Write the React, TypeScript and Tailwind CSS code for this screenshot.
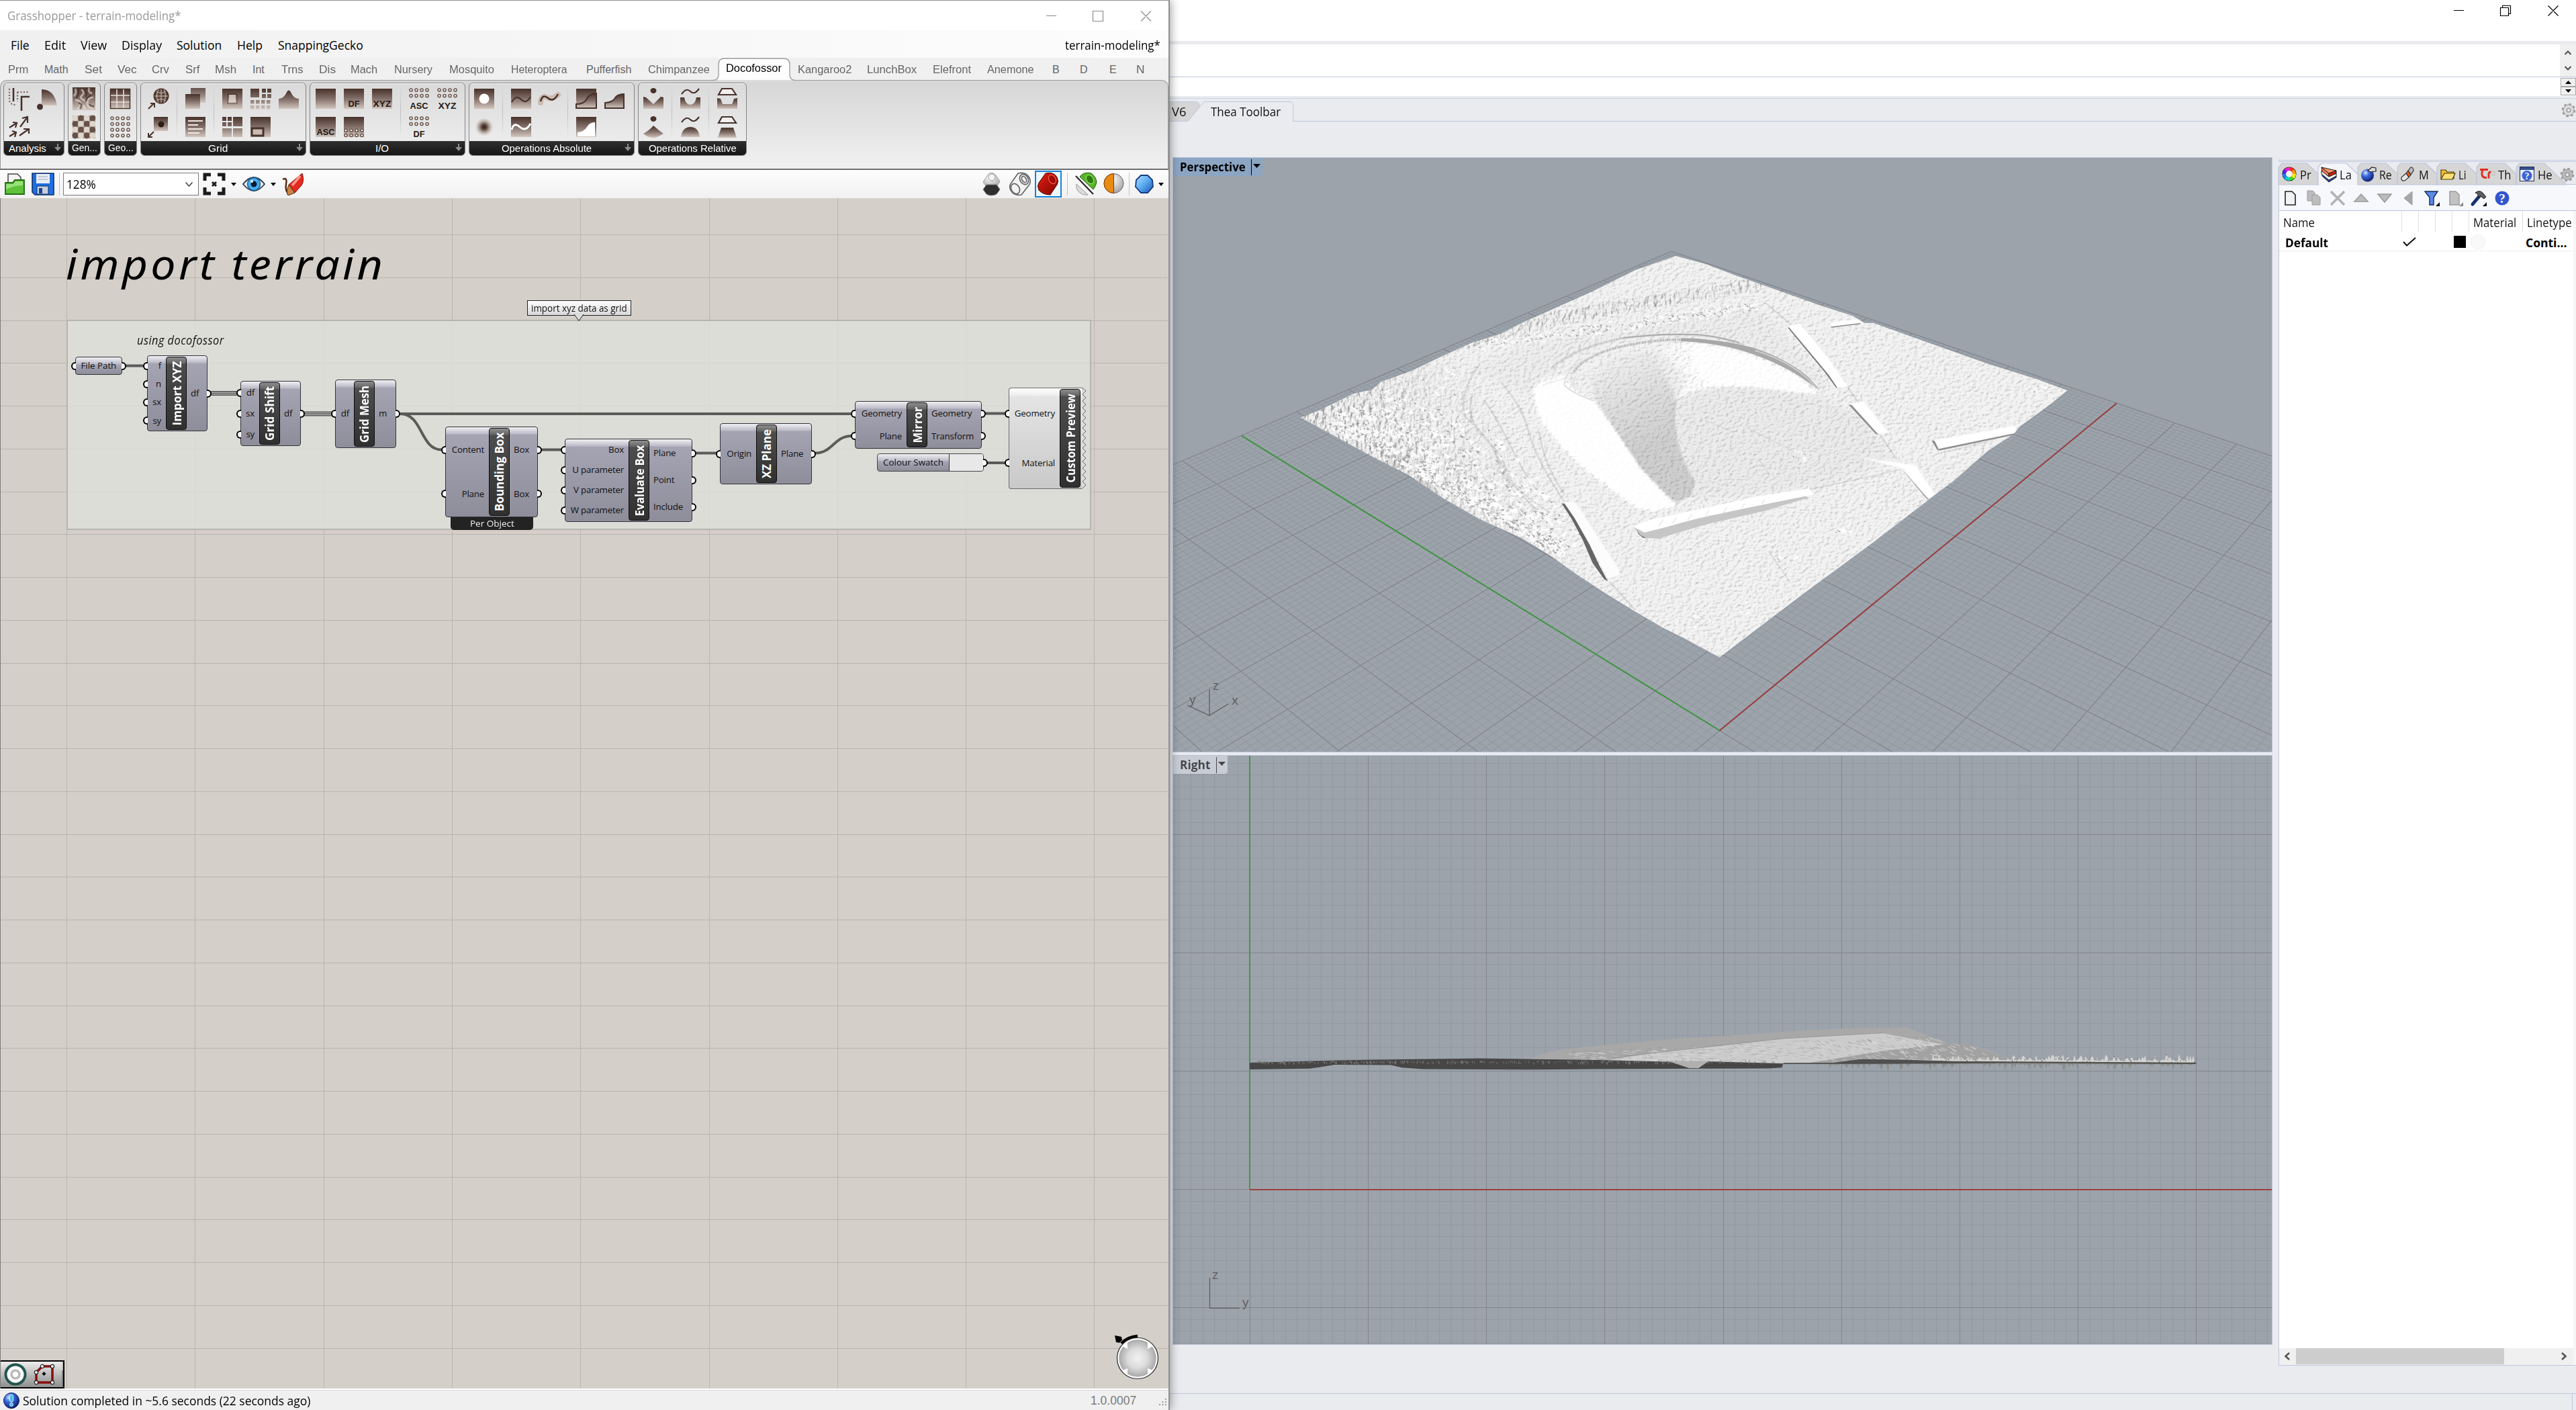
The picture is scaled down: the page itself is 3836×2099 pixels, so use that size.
import { useLayoutEffect, useRef, useState } from "react";
import type { ReactNode } from "react";

const UI = "font-['Open_Sans','Noto_Sans',sans-serif]";
const ARIAL = "font-['Liberation_Sans',sans-serif]";

/** Single line of text squeezed or stretched to an exact width. */
function Fit({ w, children, className = "" }: { w: number; children: ReactNode; className?: string }) {
  const ref = useRef<HTMLSpanElement>(null);
  const [scale, setScale] = useState(1);
  useLayoutEffect(() => {
    const natural = ref.current?.offsetWidth ?? 0;
    if (natural > 0) setScale(w / natural);
  }, [w]);
  return (
    <span className={`inline-block shrink-0 whitespace-nowrap ${className}`} style={{ width: w }}>
      <span ref={ref} className="inline-block origin-left whitespace-nowrap" style={{ transform: `scaleX(${scale})` }}>
        {children}
      </span>
    </span>
  );
}

/** Row of labels, each with its left edge and width. */
function Labels({ items, start = 0 }: { items: [string, number, number][]; start?: number }) {
  let x = start;
  return (
    <>
      {items.map(([t, l, w]) => {
        const gap = l - x;
        x = l + w;
        return (
          <span key={t} className="flex shrink-0" style={{ marginLeft: gap }}>
            <Fit w={w}>{t}</Fit>
          </span>
        );
      })}
    </>
  );
}

function Defs() {
  return (
    <svg className="absolute h-0 w-0" aria-hidden="true">
      <defs>
        <linearGradient id="br" x1="0" y1="0" x2="0" y2="1">
          <stop offset="0" stopColor="#47322a" />
          <stop offset="0.5" stopColor="#83706a" />
          <stop offset="1" stopColor="#d2c6be" />
        </linearGradient>
        <linearGradient id="brU" gradientUnits="userSpaceOnUse" x1="0" y1="0" x2="0" y2="32">
          <stop offset="0" stopColor="#47322a" />
          <stop offset="0.5" stopColor="#83706a" />
          <stop offset="1" stopColor="#d2c6be" />
        </linearGradient>
        <radialGradient id="spot">
          <stop offset="0" stopColor="#2a1a14" />
          <stop offset="0.35" stopColor="#6b554b" />
          <stop offset="1" stopColor="#d9cfc8" stopOpacity="0.3" />
        </radialGradient>
        <linearGradient id="blueG" x1="0" y1="0" x2="1" y2="1">
          <stop offset="0" stopColor="#b8e2ff" />
          <stop offset="0.5" stopColor="#58abf0" />
          <stop offset="1" stopColor="#1e4fb0" />
        </linearGradient>
        <linearGradient id="redG" x1="0" y1="0" x2="1" y2="1">
          <stop offset="0" stopColor="#e81e10" />
          <stop offset="1" stopColor="#7d0500" />
        </linearGradient>
        <radialGradient id="ball" cx="0.35" cy="0.3" r="0.8">
          <stop offset="0" stopColor="#d8e6ff" />
          <stop offset="0.35" stopColor="#3c6be0" />
          <stop offset="1" stopColor="#06135c" />
        </radialGradient>
        <radialGradient id="greyBall" cx="0.4" cy="0.3" r="0.8">
          <stop offset="0" stopColor="#ffffff" />
          <stop offset="1" stopColor="#9b9b9b" />
        </radialGradient>
        <radialGradient id="knob">
          <stop offset="0" stopColor="#f1f1f1" />
          <stop offset="0.5" stopColor="#dcdcdc" />
          <stop offset="1" stopColor="#a4a4a4" />
        </radialGradient>
      </defs>
    </svg>
  );
}

const D = "#47322a";
const sq = <rect x="1" y="1" width="30" height="30" fill="url(#br)" />;
const glyph = (t: string, y = 28) => (
  <text x="16" y={y} textAnchor="middle" fontSize="13" fontWeight="700" fill="#241812" fontFamily="Liberation Sans, sans-serif" textLength={t.length === 2 ? 17 : 27} lengthAdjust="spacingAndGlyphs">
    {t}
  </text>
);
const rings = (rows: number, y0: number, cols = 4, dx = 8, dy = 8.6) =>
  Array.from({ length: rows * cols }, (_, i) => (
    <circle key={i} cx={4 + (i % cols) * dx} cy={y0 + Math.floor(i / cols) * dy} r="2.1" fill="#f4f1ee" stroke="#6b574e" strokeWidth="1.5" />
  ));

const ICONS: Record<string, ReactNode> = {
  measure: (
    <g fill="none" stroke={D} strokeWidth="2.600">
      <path d="M7 0v20M18 13h13M19 12v22" />
      <path d="M1 1v18q2 6 9 6M13 6h18M13 6v14" strokeWidth="2.200" strokeDasharray="2 2.500" stroke="#7b665c" />
    </g>
  ),
  fan: (
    <g>
      <path d="M7 2Q26 2 30 26H7Z" fill="url(#br)" />
      <circle cx="4.500" cy="28" r="4.500" fill={D} />
    </g>
  ),
  arrows: (
    <g fill="none" stroke={D} strokeWidth="2.200">
      <path d="M1 17L12 10M6 9l6 1-2 7M17 16L28 1M20 3l8-2v9M1 30l10-6M5 22l6 2-2 7M16 29l14-10M22 19h8v7" />
    </g>
  ),
  noise: (
    <g>
      <rect width="34" height="34" x="-1" y="-1" fill="url(#br)" />
      <g stroke="#efe8e2" strokeWidth="3" opacity="0.55" fill="none">
        <path d="M3 1q3 6-2 11M12 2q6 5 1 9t5 8M24 0q-3 6 4 8M30 14q-8 0-9 7t8 9M3 18q8 0 8 6t-5 7M16 25q-1 5 3 6" />
      </g>
      <g stroke="#3c2820" strokeWidth="2.500" opacity="0.6" fill="none">
        <path d="M7 3q2 8-3 12M18 4q4 6 0 9M27 11q-8 3-8 9M8 22q7 2 2 9M24 24q2 4 7 3" />
      </g>
    </g>
  ),
  checker: (
    <g>
      <rect width="34" height="34" x="-1" y="-1" fill="#a8998f" />
      {Array.from({ length: 16 }, (_, i) => {
        const col = i % 4;
        const row = Math.floor(i / 4);
        return <circle key={i} cx={3 + col * 8.6} cy={3 + row * 8.6} r="4.600" fill={(col + row) % 2 ? "#5a443a" : "#e8dfd7"} opacity="0.85" />;
      })}
    </g>
  ),
  grid: (
    <g>
      <rect x="1.500" y="1.500" width="29" height="29" fill="url(#br)" stroke={D} strokeWidth="1.500" />
      <path d="M11 2v28M21 2v28M2 11h28M2 21h28" stroke="#e8dfd8" strokeWidth="1.600" />
    </g>
  ),
  dots: <g>{rings(4, 3)}</g>,
  globeOut: (
    <g fill="none" stroke={D} strokeWidth="2">
      <circle cx="20" cy="12" r="10.500" fill="#5c463c" />
      <path d="M10 12h20M20 2v20M13 5q7 5 14 0M13 19q7-5 14 0M16 2q-5 10 0 20M24 2q5 10 0 20" stroke="#cfc2b9" strokeWidth="1" />
      <path d="M1 31l8-8M4 23h6v6" />
    </g>
  ),
  cellOut: (
    <g fill="none" stroke={D} strokeWidth="2">
      <rect x="9" y="1" width="21" height="21" fill="url(#br)" stroke="none" />
      <circle cx="20" cy="12" r="4.500" fill="#2d1d16" stroke="none" />
      <path d="M9 23l-8 8M1 25v6h6" />
    </g>
  ),
  layers: (
    <g>
      <rect x="9" y="0" width="22" height="22" fill="url(#br)" opacity="0.8" />
      <rect x="1" y="9" width="22" height="22" fill="url(#br)" />
    </g>
  ),
  list: (
    <g>
      {sq}
      <path d="M5 7h22M5 13h15M5 19h22M5 25h17" stroke="#f0e9e4" strokeWidth="2" />
    </g>
  ),
  inset: (
    <g>
      {sq}
      <rect x="9" y="8" width="14" height="15" fill="url(#br)" stroke="#5a443a" />
      <rect x="11" y="10" width="10" height="11" fill="#e9e0d8" opacity="0.75" />
    </g>
  ),
  mosaic: (
    <g fill="url(#brU)">
      <rect x="1" y="1" width="13" height="13" />
      {[18, 26].map((x) => [1, 9].map((y) => <rect key={`${x}${y}`} x={x} y={y} width="6" height="6" />))}
      {[1, 9, 17, 25].map((x) => [18, 26].map((y) => <rect key={`${x}-${y}`} x={x} y={y} width="5.500" height="5.500" />))}
    </g>
  ),
  mosaic2: (
    <g fill="url(#brU)">
      <rect x="17" y="1" width="14" height="14" />
      <rect x="1" y="18" width="14" height="13" />
      <rect x="17" y="18" width="14" height="13" />
      {[1, 9].map((x) => [1, 9].map((y) => <rect key={`${x}${y}`} x={x} y={y} width="6" height="6" />))}
    </g>
  ),
  corner: (
    <g>
      {sq}
      <rect x="3" y="18" width="17" height="11" fill="#c8bab1" stroke={D} strokeWidth="3" />
    </g>
  ),
  bell: <path d="M1 31V16q8-1 11-8 4-9 8 0 3 7 11 8v15Z" fill="url(#br)" />,
  plain: sq,
  df: <g>{sq}{glyph("DF")}</g>,
  xyz: <g>{sq}{glyph("XYZ")}</g>,
  asc: <g>{sq}{glyph("ASC")}</g>,
  sqdots: <g>{sq}{rings(2, 21, 4, 8, 7.5)}</g>,
  dasc: <g>{rings(2, 3)}{glyph("ASC", 31)}</g>,
  dxyz: <g>{rings(2, 3)}{glyph("XYZ", 31)}</g>,
  ddf: <g>{rings(2, 3)}{glyph("DF", 31)}</g>,
  hole: <g>{sq}<circle cx="16" cy="16" r="7.500" fill="#fff" /></g>,
  spot: <circle cx="16" cy="16" r="13" fill="url(#spot)" />,
  waveD: <g>{sq}<path d="M2 21q7-12 14-4t14-4" fill="none" stroke={D} strokeWidth="2.200" /></g>,
  waveB: <g fill="none"><path d="M3 22Q4 10 12 14T29 10" stroke="#cdbcb0" strokeWidth="8" strokeLinecap="round" /><path d="M3 20Q6 8 14 15T29 9" stroke={D} strokeWidth="2.500" /></g>,
  waveW: <g>{sq}<path d="M2 20Q5 8 14 16T30 11" fill="none" stroke="#fff" strokeWidth="3" /></g>,
  curveD: <g>{sq}<path d="M1 30V24q12 0 16-8t14-8v22Z" fill="url(#br)" stroke={D} strokeWidth="2" /></g>,
  curve: <path d="M2 30V22q12-1 15-7t13-6v21Z" fill="url(#br)" stroke={D} strokeWidth="2" />,
  curveW: <g>{sq}<path d="M3 30V24q10-1 14-8t12-7v21Z" fill="#fff" /></g>,
  dotV: <g><ellipse cx="16" cy="4" rx="4.500" ry="4" fill={D} /><path d="M1 31V13l4 1 11 10 11-11 4 1v17Z" fill="url(#br)" /></g>,
  dotHill: <g><ellipse cx="16" cy="4" rx="4.500" ry="4" fill={D} /><path d="M16 14Q24 21 31 26 20 33 16 32 8 32 1 26 10 21 16 14Z" fill="url(#br)" /></g>,
  waveU: <g><path d="M3 9q7-10 13-4t13-4" fill="none" stroke={D} strokeWidth="2.200" /><path d="M1 31V14h6q2 11 9 11t9-11h6v17Z" fill="url(#br)" /></g>,
  waveHill: <g><path d="M3 9q7-10 13-4t13-4" fill="none" stroke={D} strokeWidth="2.200" /><path d="M2 31Q4 16 16 16T30 31Z" fill="url(#br)" /></g>,
  trapU: <g><path d="M8 1h15l6 9H3Z" fill="#f2efed" stroke={D} strokeWidth="2.200" /><path d="M1 31V15l5 1 3 8h14l3-8 5-1v16Z" fill="url(#br)" /></g>,
  trapHill: <g><path d="M8 1h15l6 9H3Z" fill="#f2efed" stroke={D} strokeWidth="2.200" /><path d="M2 32L7 17H25L30 32Z" fill="url(#br)" /></g>,
};

function ToolIcon({ name }: { name: string }) {
  return (
    <span className="flex h-[42px] w-[42px] items-center justify-center">
      {name && (
        <svg width="32" height="32" viewBox="0 0 32 32" className="overflow-visible">
          {ICONS[name]}
        </svg>
      )}
    </span>
  );
}

type Panel = { label: string; w: number; lw: number; pl: number; more?: boolean; groups: string[][][] };
const PANELS: Panel[] = [
  { label: "Analysis", w: 91, lw: 56, pl: 2, more: true, groups: [[["measure", "arrows"], ["fan", ""]]] },
  { label: "Gen...", w: 49, lw: 38, pl: 2, groups: [[["noise", "checker"]]] },
  { label: "Geo...", w: 49, lw: 38, pl: 2, groups: [[["grid", "dots"]]] },
  { label: "Grid", w: 247, lw: 29, pl: 5, more: true, groups: [[["globeOut", "cellOut"]], [["layers", "list"]], [["inset", "mosaic2"], ["mosaic", "corner"], ["bell", ""]]] },
  { label: "I/O", w: 232, lw: 20, pl: 2, more: true, groups: [[["plain", "asc"], ["df", "sqdots"], ["xyz", ""]], [["dasc", "ddf"], ["dxyz", ""]]] },
  { label: "Operations Absolute", w: 247, lw: 134, pl: 1, more: true, groups: [[["hole", "spot"]], [["waveD", "waveW"], ["waveB", ""]], [["curveD", "curveW"], ["curve", ""]]] },
  { label: "Operations Relative", w: 162, lw: 131, pl: 1, groups: [[["dotV", "dotHill"]], [["waveU", "waveHill"]], [["trapU", "trapHill"]]] },
];

function Ribbon() {
  return (
    <div className={`flex h-[132px] shrink-0 gap-[5px] rounded-t-[10px] border border-b-0 border-[#9b9b9b] bg-gradient-to-b from-[#d6d6d6] to-[#f1f1f1] pl-1 pt-[3px] ${ARIAL}`}>
      {PANELS.map((p) => (
        <div key={p.label} className="flex h-[109px] shrink-0 flex-col overflow-hidden rounded-[6px] border border-[#858585] bg-gradient-to-b from-[#dadada] to-[#f0f0f0]" style={{ width: p.w }}>
          <div className="flex h-[87px] pt-[2px] shadow-[inset_0_1px_0_#fff]" style={{ paddingLeft: p.pl }}>
            {p.groups.map((g, gi) => (
              <div key={gi} className="flex">
                {gi > 0 && <span className="mx-[6px] h-[80px] w-px bg-gradient-to-b from-transparent via-[#bdbdbd] to-transparent" />}
                {g.map((col, ci) => (
                  <div key={ci} className="flex flex-col">
                    {col.map((n, i) => (
                      <ToolIcon key={i} name={n} />
                    ))}
                  </div>
                ))}
              </div>
            ))}
          </div>
          <div className="relative flex h-[21px] items-center justify-center bg-gradient-to-b from-[#2f2f2f] to-[#161616] text-[15px] leading-none text-white">
            <Fit w={p.lw} className={p.more ? (p.w < 100 ? "mr-[19px]" : "mr-[16px]") : p.w < 60 ? "mb-[2px]" : ""}>{p.label}</Fit>
            {p.more && (
              <svg className="absolute right-[4px] top-[4px]" width="10" height="12" viewBox="0 0 10 12">
                <path d="M4 0h2v5h4L5 11 0 5h4Z" fill="#8e8e8e" />
              </svg>
            )}
          </div>
        </div>
      ))}
    </div>
  );
}

const Caret = ({ className = "" }: { className?: string }) => (
  <svg width="8" height="5" viewBox="0 0 8 5" className={`shrink-0 ${className}`}>
    <path d="M0 0h8L4 5Z" />
  </svg>
);

function CanvasToolbar() {
  return (
    <div className="flex h-[44px] shrink-0 items-center border-t-2 border-[#6f6f6f] bg-gradient-to-b from-[#fdfdfd] to-[#f1f1f1] pl-[7px] pr-[7px]">
      <svg width="30" height="34" viewBox="0 0 30 34">
        <path d="M5 2h14l5 5v16H5Z" fill="#f3f3f3" stroke="#444" strokeWidth="1.500" />
        <path d="M1 15h11l3-4h14v21H1Z" fill="#5fc23a" stroke="#226c10" strokeWidth="1.800" />
        <path d="M2 17h11l3-4h11v6q-14 0-25 6Z" fill="#a5e887" opacity="0.8" />
      </svg>
      <svg width="34" height="34" viewBox="0 0 34 34" className="ml-[10px]">
        <path d="M1 1h32v32H5L1 29Z" fill="#1f6fe0" stroke="#0d3170" strokeWidth="1.600" />
        <rect x="7" y="2" width="20" height="14" fill="#e9edf4" />
        <path d="M10 6h14M10 10h14" stroke="#9aa6bb" />
        <rect x="8" y="20" width="17" height="12" fill="#c7cfdb" stroke="#0d3170" />
        <rect x="11" y="23" width="5" height="8" fill="#1b448f" />
      </svg>
      <span className="ml-[7px] h-[34px] w-px bg-[#c4c4c4]" />
      <div className={`ml-[5px] flex h-[34px] w-[202px] items-center justify-between border border-[#7a7a7a] bg-white pl-1 pr-2 text-[18px] ${UI}`}>
        <Fit w={44}>128%</Fit>
        <svg width="11" height="7" viewBox="0 0 11 7" fill="none" stroke="#333" strokeWidth="1.300">
          <path d="M0.500 0.500l5 5.500 5-5.500" />
        </svg>
      </div>
      <svg width="34" height="34" viewBox="0 0 34 34" className="ml-[6px]" fill="none" stroke="#1b1b1b" strokeWidth="5">
        <path d="M3 12V3h9M22 3h9v9M31 22v9h-9M12 31H3v-9" />
        <path d="M14 14l6 6M20 14l-6 6" strokeWidth="3" />
      </svg>
      <Caret className="ml-[8px]" />
      <svg width="34" height="24" viewBox="0 0 34 24" className="ml-[9px]">
        <path d="M1 12Q9 2 17 2t16 10Q25 22 17 22T1 12Z" fill="#eef4f8" stroke="#2c3b47" strokeWidth="1.800" />
        <circle cx="17" cy="12" r="9.500" fill="#45aef0" stroke="#1c5b95" strokeWidth="1.500" />
        <circle cx="17" cy="12" r="4.500" fill="#0a1c30" />
        <circle cx="14" cy="8" r="2" fill="#fff" />
      </svg>
      <Caret className="ml-[8px]" />
      <svg width="34" height="34" viewBox="0 0 34 34" className="ml-[8px]">
        <path d="M2 10Q9 6 7 17T12 32" fill="none" stroke="#5b2a18" strokeWidth="2.500" />
        <path d="M31 1Q35 14 29 20L20 30 11 18Z" fill="#e32b22" stroke="#7c0d0a" />
        <path d="M28 5L16 19" stroke="#ff9a8a" strokeWidth="3.500" />
        <path d="M11 18l9 12-10 4Q6 30 11 18Z" fill="#c88444" stroke="#53290a" />
      </svg>
      <div className="ml-auto flex items-center">
        <svg width="27" height="36" viewBox="0 0 27 36">
          <path d="M8 4Q14-2 20 5L26 14 20 24H7L1 15Z" fill="url(#greyBall)" stroke="#a3a3a3" />
          <ellipse cx="14" cy="8" rx="5" ry="5" fill="#f5f5f5" stroke="#999" />
          <path d="M6 19h15l5 7-5 7q-8 4-15 0L1 26Z" fill="#2f2f2f" stroke="#777" />
        </svg>
        <svg width="34" height="36" viewBox="0 0 34 36" className="ml-[12px]" fill="#f2f2f2" stroke="#666" strokeWidth="1.700">
          <path d="M14 2q12-3 17 7 3 6-1 11L19 34q-11 2-16-7-3-6 1-11Z" />
          <ellipse cx="23" cy="11" rx="6" ry="8" transform="rotate(-30 23 11)" />
          <ellipse cx="23" cy="11" rx="3" ry="5" transform="rotate(-30 23 11)" />
          <ellipse cx="10" cy="25" rx="6" ry="8" transform="rotate(-30 10 25)" />
        </svg>
        <span className="ml-[5px] flex h-[40px] w-[40px] items-center justify-center border-2 border-[#1683d8] bg-[#eef6fc]">
          <svg width="34" height="36" viewBox="0 0 34 36" className="shrink-0">
            <path d="M13 2q12-3 17 6 3 6 0 11L20 34Q9 34 3 27q-3-6 0-11Z" fill="url(#redG)" stroke="#4d0400" />
            <ellipse cx="23" cy="11" rx="5" ry="7" transform="rotate(-30 23 11)" fill="#a00c05" stroke="#ff6b5c" />
          </svg>
        </span>
        <span className="ml-[8px] h-[34px] w-px bg-[#c4c4c4]" />
        <svg width="34" height="36" viewBox="0 0 34 36" className="ml-[10px]">
          <path d="M3 18l17 16q-9 1-15-6-3-4-2-10Z" fill="#dcdcdc" stroke="#999" />
          <path d="M8 7q6-8 17-5 7 5 8 13-1 6-5 11Z" fill="#57b52a" stroke="#1f5d0a" />
          <ellipse cx="23" cy="11" rx="5" ry="7" transform="rotate(-30 23 11)" fill="#2f7d12" stroke="#a4ea80" />
          <path d="M2 6l26 27" stroke="#222" strokeWidth="2" />
        </svg>
        <svg width="31" height="34" viewBox="0 0 31 34" className="ml-[9px]">
          <circle cx="15.500" cy="16" r="14.500" fill="url(#greyBall)" stroke="#666" />
          <path d="M15.500 1.500a14.500 14.500 0 0 0 0 29Z" fill="#e98a12" stroke="#8a3a00" />
        </svg>
        <span className="ml-[7px] h-[34px] w-px bg-[#c4c4c4]" />
        <svg width="28" height="28" viewBox="0 0 28 28" className="ml-[8px]">
          <path d="M9 1h10l7 7 1 10-8 9H9l-8-9 1-10Z" fill="url(#blueG)" stroke="#173a83" strokeWidth="1.800" />
        </svg>
        <Caret className="ml-[7px]" />
      </div>
    </div>
  );
}

type NodeSpec = {
  title: string; len: number; x: number; y: number; w: number; h: number;
  plate: number; ins: string[]; outs: string[]; light?: boolean;
};
const NODES: NodeSpec[] = [
  { title: "Import XYZ", len: 96, x: 219, y: 529, w: 90, h: 113, plate: 28, ins: ["f", "n", "sx", "sy"], outs: ["df"] },
  { title: "Grid Shift", len: 81, x: 358, y: 567, w: 90, h: 97, plate: 28, ins: ["df", "sx", "sy"], outs: ["df"] },
  { title: "Grid Mesh", len: 85, x: 499, y: 565, w: 91, h: 102, plate: 28, ins: ["df"], outs: ["m"] },
  { title: "Bounding Box", len: 117, x: 663, y: 635, w: 138, h: 135, plate: 65, ins: ["Content", "Plane"], outs: ["Box", "Box"] },
  { title: "Evaluate Box", len: 106, x: 841, y: 653, w: 190, h: 124, plate: 95, ins: ["Box", "U parameter", "V parameter", "W parameter"], outs: ["Plane", "Point", "Include"] },
  { title: "XZ Plane", len: 73, x: 1072, y: 630, w: 137, h: 91, plate: 54, ins: ["Origin"], outs: ["Plane"] },
  { title: "Mirror", len: 54, x: 1273, y: 597, w: 189, h: 71, plate: 77, ins: ["Geometry", "Plane"], outs: ["Geometry", "Transform"] },
  { title: "Custom Preview", len: 132, x: 1502, y: 577, w: 110, h: 151, plate: 76, ins: ["Geometry", "Material"], outs: [], light: true },
];

const GripL = () => <span className="absolute -left-[7px] top-1/2 h-[12px] w-[7px] -translate-y-1/2 rounded-l-full border-2 border-r-0 border-black bg-white" />;
const GripR = () => <span className="absolute -right-[7px] top-1/2 h-[12px] w-[7px] -translate-y-1/2 rounded-r-full border-2 border-l-0 border-black bg-white" />;

const BODY = "bg-[linear-gradient(180deg,#f0f0f4_0px,#bbbac7_10px,#a5a4b3_11px,#8e8d9a_100%)]";

function GhNode({ n }: { n: NodeSpec }) {
  return (
    <div
      className={`absolute flex rounded-[4px] border-[1.5px] py-[1px] ${n.light ? "rounded-r-none border-r-0 border-[#6c6c6c] bg-[linear-gradient(180deg,#fff_0px,#ededed_11px,#e4e4e4_12px,#c9c9c9_100%)]" : `border-[#33333a] ${BODY}`}`}
      style={{ left: n.x - 1, top: n.y - 295, width: n.w, height: n.h }}
    >
      <div className="flex flex-col" style={{ width: n.plate - 1 }}>
        {n.ins.map((t, i) => (
          <div key={i} className="relative flex flex-1 items-center justify-end whitespace-nowrap pr-[7px] tracking-[-0.2px]">
            <GripL />
            {t}
          </div>
        ))}
      </div>
      <div className="flex w-[31px] shrink-0 items-center justify-center rounded-[4px] border-[1.5px] border-[#0c0c0c] bg-[linear-gradient(180deg,#8f8f8f_0px,#636363_9px,#4d4d4d_10px,#303030_100%)]">
        <span className="shrink-0 -rotate-90 text-[17px] font-bold leading-none text-white">
          <Fit w={n.len}>{n.title}</Fit>
        </span>
      </div>
      <div className="flex flex-1 flex-col">
        {n.outs.map((t, i) => (
          <div key={i} className="relative flex flex-1 items-center whitespace-nowrap pl-[6px] tracking-[-0.2px]">
            <GripR />
            {t}
          </div>
        ))}
      </div>
    </div>
  );
}

const zigzag = (() => {
  let d = "M0 0";
  for (let i = 0; i < 15; i++) d += `L6 ${5 + i * 10}L1 ${Math.min(151, 10 + i * 10)}`;
  return d;
})();

function Wires() {
  return (
    <svg className="absolute left-0 top-0" width="1738" height="600" viewBox="1 295 1738 600" fill="none" stroke="#5b5b59" strokeWidth="4">
      <path d="M186 544.500H214M596 616H1267M596 616C630 616 625 669.500 658 669.500M806 669.500H836M1036 674.500H1068M1214 674.500C1240 674.500 1242 649 1268 649M1466 615.500H1498M1469 689H1498" />
      <g strokeWidth="7">
        <path d="M314 585.500H353M453 616H494" />
        <path d="M314 585.500H353M453 616H494" stroke="#c8c8c5" strokeWidth="3.500" />
        <path d="M314 585.500H353M453 616H494" strokeWidth="1.500" />
      </g>
    </svg>
  );
}

function GhCanvas() {
  const vs = Array.from({ length: 9 }, (_, i) => 98 + i * 191.3);
  const hs = Array.from({ length: 28 }, (_, i) => 54 + i * 63.76);
  return (
    <div className={`relative flex-1 overflow-hidden border-l border-[#7d7d7d] bg-[#d4cfc8] text-[13.3px] leading-none text-[#111] ${UI}`}>
      <svg className="absolute inset-0" width="1738" height="1773" shapeRendering="crispEdges" fill="#bab6af">
        {vs.map((x) => <rect key={x} x={Math.round(x)} y="0" width="1" height="1773" />)}
        {hs.map((y) => <rect key={y} x="0" y={Math.round(y)} width="1738" height="1" />)}
      </svg>
      <div className="absolute left-[98px] top-[181px] h-[313px] w-[1526px] border-2 border-[#b3b5ae] bg-[#dfe0dc]/80" />
      <div className="absolute left-[97px] top-[57px] text-[62px] italic leading-[80px] tracking-[4px] text-black font-['Noto_Sans','Open_Sans',sans-serif]">
        <Fit w={476}>import terrain</Fit>
      </div>
      <div className="absolute left-[203px] top-[201px] text-[17.5px] italic leading-[20px] tracking-[0.5px]">
        <Fit w={130}>using docofossor</Fit>
      </div>
      <div className="absolute left-[784px] top-[152px] flex h-[23px] w-[155px] items-center justify-center border-[1.5px] border-[#222] bg-gradient-to-b from-white to-[#d8d8d8] text-[14px]">
        <Fit w={143}>import xyz data as grid</Fit>
        <svg className="absolute left-[68px] top-[20px]" width="16" height="11" viewBox="0 0 16 11">
          <path d="M1 0L8 9.500 15 0" fill="#dcdcdc" stroke="#222" />
        </svg>
      </div>
      <Wires />
      <div className={`absolute left-[111px] top-[236px] flex h-[27px] w-[70px] items-center justify-center rounded-[4px] border-[1.5px] border-[#33333a] ${BODY}`}>
        <GripL />
        <Fit w={53}>File Path</Fit>
        <GripR />
      </div>
      {NODES.map((n) => <GhNode key={n.title} n={n} />)}
      <div className="absolute left-[670px] top-[475px] flex h-[19px] w-[123px] items-center justify-center rounded-b-[5px] bg-[#232323] text-[#f0f0f0]">
        <Fit w={66}>Per Object</Fit>
      </div>
      <svg className="absolute left-[1610px] top-[282px]" width="8" height="152" viewBox="0 0 8 152">
        <path d={zigzag + "L0 151Z"} fill="#dcdcdc" />
        <path d={zigzag} fill="none" stroke="#666" />
      </svg>
      <div className={`absolute left-[1305px] top-[380px] flex h-[27px] w-[159px] items-stretch rounded-[4px] border-[1.5px] border-[#44444a] ${BODY}`}>
        <span className="flex flex-1 items-center justify-center border-r-[1.5px] border-[#33333a]">
          <Fit w={90}>Colour Swatch</Fit>
        </span>
        <span className="w-[50px] rounded-r-[3px] bg-[#e8e8e8]" />
        <GripR />
      </div>
      <div className="absolute bottom-0 left-0 flex h-[42px] w-[95px] items-center gap-[10px] border-2 border-l-0 border-black bg-gradient-to-b from-[#ededed] to-[#8f8f8f] pl-[5px]">
        <svg width="34" height="34" viewBox="0 0 34 34" className="shrink-0">
          <circle cx="17" cy="17" r="14.500" fill="#fff" stroke="#235650" strokeWidth="4" />
          <circle cx="17" cy="17" r="6" fill="#fff" stroke="#b9b9b9" strokeWidth="3.500" />
        </svg>
        <svg width="32" height="32" viewBox="0 0 32 32" className="shrink-0">
          <path d="M4 28V13L13 4H28V28Z" fill="none" stroke="#8a0d0d" strokeWidth="3.500" />
          {[[4, 28], [4, 13], [13, 4], [28, 4], [28, 28]].map(([x, y]) => (
            <circle key={`${x}-${y}`} cx={x} cy={y} r="2.600" fill="#fff" stroke="#222" strokeWidth="1.200" />
          ))}
          <path d="M15.500 12l3 3-3 3-3-3Z" />
        </svg>
        <span className="ml-auto h-full w-[8px] bg-gradient-to-b from-[#c6c6c6] from-35% to-[#808080] to-35%" />
      </div>
      <svg className="absolute bottom-[12px] right-[13px]" width="70" height="70" viewBox="0 0 70 70">
        <path d="M3 3l10 2 1 5-4 4-5-1Z" />
        <path d="M13 15Q22 5 37 4" fill="none" stroke="#000" strokeWidth="4.500" />
        <circle cx="37" cy="37" r="29" fill="url(#knob)" stroke="#fff" strokeWidth="2.500" />
        <circle cx="37" cy="37" r="30.500" fill="none" stroke="#2b2b2b" strokeWidth="1.200" />
        <g fill="#fff">
          <path d="M14 19l8-7 0 11ZM60 19l-8-7 0 11ZM14 55l8-3 0 9ZM60 55l-8-3 0 9Z" />
        </g>
      </svg>
    </div>
  );
}

const TABS1: [string, number, number][] = [
  ["Prm", 12, 30], ["Math", 66, 36], ["Set", 126, 26], ["Vec", 175, 29], ["Crv", 226, 26], ["Srf", 276, 21], ["Msh", 320, 32], ["Int", 376, 18],
  ["Trns", 419, 32], ["Dis", 475, 25], ["Mach", 522, 40], ["Nursery", 587, 57], ["Mosquito", 669, 67], ["Heteroptera", 761, 84], ["Pufferfish", 873, 67], ["Chimpanzee", 965, 92],
];
const TABS2: [string, number, number][] = [
  ["Kangaroo2", 1188, 80], ["LunchBox", 1291, 74], ["Elefront", 1389, 57], ["Anemone", 1470, 70], ["B", 1567, 11], ["D", 1608, 12], ["E", 1652, 11], ["N", 1692, 13],
];

function Grasshopper() {
  return (
    <div className={`relative z-10 flex h-full w-[1742px] shrink-0 flex-col border-r-2 border-t border-[#8f8f8f] bg-[#f0f0f0] shadow-[0_0_14px_rgba(0,0,0,0.45)] ${UI}`}>
      <div className="flex h-[44px] shrink-0 items-center bg-white text-[17.5px] text-[#999]">
        <Labels items={[["Grasshopper - terrain-modeling*", 11, 259]]} />
        <svg className="ml-auto mr-[25px] mt-[1px]" width="157" height="16" viewBox="0 0 157 16" fill="none" stroke="#8c8c8c" strokeWidth="1.200">
          <path d="M0 7.500h15M69.500 0.500h15v15h-15ZM141 0.500l15 15M156 0.500l-15 15" />
        </svg>
      </div>
      <div className="flex h-[41px] shrink-0 items-center bg-gradient-to-r from-[#f0f0f0] to-[#fdfdfd] pt-[3px] text-[17.5px] text-black">
        <Labels items={[["File", 16, 28], ["Edit", 66, 32], ["View", 120, 39], ["Display", 181, 60], ["Solution", 263, 67], ["Help", 353, 38], ["SnappingGecko", 414, 127]]} />
        <Fit w={142} className="ml-auto mr-[12px]">terrain-modeling*</Fit>
      </div>
      <div className={`relative flex h-[33px] shrink-0 items-center pt-[2px] text-[16px] text-[#666] ${ARIAL}`}>
        <Labels items={TABS1} />
        <svg className="absolute left-[1059px] top-0 z-10 h-[36px] w-[130px]" viewBox="0 0 130 36">
          <path d="M3 33.500Q11 33 11 25V10Q11 1 20 1H108Q117 1 117 10V25Q117 33 125 33.500Z" fill="#fdfdfd" />
          <path d="M3 33.500Q11 33 11 25V10Q11 1 20 1H108Q117 1 117 10V25Q117 33 125 33.500" fill="none" stroke="#9b9b9b" strokeWidth="1.300" />
          <path d="M10 33h110v3H10Z" fill="#dcdcdc" />
        </svg>
        <span className="z-20 mb-[4px] ml-[24px] text-black"><Fit w={83}>Docofossor</Fit></span>
        <Labels items={TABS2} start={1164} />
      </div>
      <Ribbon />
      <CanvasToolbar />
      <GhCanvas />
      <div className="flex h-[32px] shrink-0 items-center border-t-2 border-white bg-[#f0f0f0] pl-[5px] shadow-[inset_0_1px_0_#d9d9d9]">
        <svg width="24" height="24" viewBox="0 0 24 24" className="mt-[1px]">
          <circle cx="12" cy="12" r="11.500" fill="url(#ball)" stroke="#0c2161" />
          <rect x="9.500" y="3" width="5" height="11" rx="2.500" fill="#45b8e8" stroke="#d5f2ff" />
          <circle cx="12" cy="18" r="2.500" fill="#45b8e8" stroke="#d5f2ff" />
        </svg>
        <Fit w={428} className="ml-[5px] pt-[2px] text-[17.5px] text-black">Solution completed in ~5.6 seconds (22 seconds ago)</Fit>
        <Fit w={68} className={`ml-auto mr-[34px] pt-[2px] text-[17.5px] text-[#7a7a7a] ${ARIAL}`}>1.0.0007</Fit>
        <svg className="mr-[2px] mt-[8px]" width="12" height="12" viewBox="0 0 12 12" fill="#9d9d9d">
          <path d="M9 0h2v2H9ZM9 4h2v2H9ZM4.500 4h2v2h-2ZM9 8h2v2H9ZM4.500 8h2v2h-2ZM0 8h2v2H0Z" />
        </svg>
      </div>
    </div>
  );
}

/* Perspective construction plane: unit square mapped onto the view. */
const H = { a: 2037.2, b: 22.7, c: 2560.8, d: -211.95, e: -181.2, f: 1087.5, g: 0.45876, h: 0.3977 };
const project = (u: number, v: number) => {
  const k = H.g * u + H.h * v + 1;
  return `${((H.a * u + H.b * v + H.c) / k - 1747).toFixed(1)} ${((H.d * u + H.e * v + H.f) / k - 235).toFixed(1)}`;
};
const gridPath = (major: boolean) => {
  let d = "";
  for (let i = -100; i <= 100; i++) {
    if ((i % 10 === 0) !== major) continue;
    const t = i / 100;
    d += `M${project(t, -1)}L${project(t, 1)}M${project(-1, t)}L${project(1, t)}`;
  }
  return d;
};

/* Small deterministic generator for mesh roughness. */
const seeded = (seed: number) => () => {
  seed = (seed * 1103515245 + 12345) % 2147483648;
  return seed / 2147483648;
};

const OUTLINE =
  "M718 263L760 284 800 312 870 357 920 390 968 418 985 437 998 437 1060 478 1160 543 1230 583 1272 612 1250 645 1205 705 1196 725 1160 768 1110 848 1085 882 1076 895 1000 1002 900 1137 780 1304 730 1255 700 1228 660 1185 620 1140 580 1092 540 1040 500 995 440 945 390 893 340 832 290 785 230 725 187 682 215 662 240 640 262 620 288 610 300 590 345 560 385 525 430 488 470 465 500 437 600 355 660 300Z";

function Terrain() {
  const rnd = seeded(11);
  let clumps = "";
  let lights = "";
  const blot = (x: number, y: number, s: number) => `M${x.toFixed(0)} ${y.toFixed(0)}l${(s * (rnd() - 0.2)).toFixed(1)} ${(s * 1.6 * rnd()).toFixed(1)} ${(s * 0.6 * rnd()).toFixed(1)} ${(-s * rnd()).toFixed(1)}Z`;
  for (let i = 0; i < 620; i++) {
    const t = rnd();
    const r = rnd() * rnd() * (1 - 0.65 * t);
    const x = 210 + t * 335 + r * 170;
    const y = 685 + t * 345 - r * 150;
    clumps += blot(x, y, 6);
    lights += blot(x + 4, y + 3, 13);
  }
  for (let i = 0; i < 150; i++) {
    const t = rnd();
    clumps += blot(430 + t * 400, 495 - t * 105 + (rnd() - 0.5) * 20, 5);
    lights += blot(433 + t * 400, 495 - t * 105 + (rnd() - 0.5) * 28, 9);
  }
  for (let i = 0; i < 45; i++) {
    const [cx, cy] = [[872, 1048], [890, 778], [948, 970], [750, 1205], [815, 1175], [1235, 605], [400, 565], [655, 445]][i % 8];
    clumps += blot(cx + (rnd() - 0.5) * 22, cy + (rnd() - 0.5) * 22, 4);
    lights += blot(cx + (rnd() - 0.5) * 26, cy + (rnd() - 0.5) * 32, 11);
  }
  return (
    <g>
      <defs>
        <clipPath id="meshClip">
          <path d={OUTLINE} transform="translate(-7 -5) scale(1.0523 0.574)" />
        </clipPath>
        <filter id="grain" x="0" y="0" width="1" height="1" colorInterpolationFilters="sRGB">
          <feTurbulence type="fractalNoise" baseFrequency="0.16 0.24" numOctaves="3" seed="4" />
          <feDiffuseLighting surfaceScale="0.900" diffuseConstant="1.13" lightingColor="#fff">
            <feDistantLight azimuth="215" elevation="62" />
          </feDiffuseLighting>
        </filter>
        <filter id="coarse" x="0" y="0" width="1" height="1" colorInterpolationFilters="sRGB">
          <feTurbulence type="fractalNoise" baseFrequency="0.16 0.1" numOctaves="4" seed="9" />
          <feDiffuseLighting surfaceScale="4" diffuseConstant="1.22" lightingColor="#fff">
            <feDistantLight azimuth="200" elevation="58" />
          </feDiffuseLighting>
        </filter>
        <filter id="soft"><feGaussianBlur stdDeviation="12" /></filter>
        <filter id="soft2"><feGaussianBlur stdDeviation="4" /></filter>
        <filter id="soft3"><feGaussianBlur stdDeviation="1.500" /></filter>
        <linearGradient id="slope" gradientUnits="userSpaceOnUse" x1="560" y1="240" x2="720" y2="620">
          <stop offset="0" stopColor="#efefef" />
          <stop offset="0.5" stopColor="#dedede" />
          <stop offset="1" stopColor="#cfcfcf" />
        </linearGradient>
        <linearGradient id="dome" gradientUnits="userSpaceOnUse" x1="660" y1="300" x2="900" y2="260">
          <stop offset="0" stopColor="#fff" stopOpacity="0" />
          <stop offset="1" stopColor="#fff" />
        </linearGradient>
        <linearGradient id="roughMaskG" gradientUnits="userSpaceOnUse" x1="300" y1="560" x2="520" y2="440">
          <stop offset="0" stopColor="#fff" />
          <stop offset="0.45" stopColor="#999" />
          <stop offset="1" stopColor="#000" />
        </linearGradient>
        <mask id="roughMask" maskUnits="userSpaceOnUse" x="0" y="0" width="1636" height="884">
          <rect width="1636" height="884" fill="url(#roughMaskG)" />
          <path d="M400 275L540 232 740 200 880 178 880 196 720 222 560 252 440 284Z" fill="#aaa" filter="url(#soft3)" />
        </mask>
      </defs>
      <g clipPath="url(#meshClip)">
        <path d={OUTLINE} transform="translate(-7 -5) scale(1.0523 0.574)" fill="#f3f3f3" />
        <g transform="translate(483 215) scale(0.33333)">
          <path d="M800 440Q880 385 1040 373 1200 380 1430 410L1640 520 1760 700 1500 810 1300 840 870 880Q850 760 815 670 780 560 800 440Z" fill="#ececec" filter="url(#soft)" />
          <path d="M-120 300Q200 130 560 100L1180 30 1480 360 1440 400Q1300 260 1100 190 900 140 600 170 380 210 250 290L160 420Z" fill="#eeeeee" filter="url(#soft)" />
          <path d="M160 380Q200 320 300 325 300 380 430 440L540 590 640 740 800 905 700 935 620 920 500 830 380 740 280 640 200 540Q160 460 160 380Z" fill="#fff" filter="url(#soft2)" />
          <path d="M415 345Q440 275 530 235L720 210 850 330 800 440Q770 560 830 720L880 800 870 860 800 895 760 865 640 740 540 590 440 440Z" fill="url(#slope)" filter="url(#soft2)" />
          <path d="M660 210Q850 165 1000 195L1200 255 1330 320 1435 408 1300 400Q1100 366 950 380 850 400 795 440 760 330 660 210Z" fill="url(#dome)" filter="url(#soft2)" />
          <path d="M795 450Q770 560 830 710L870 800" stroke="#cbcbcb" strokeWidth="8" filter="url(#soft2)" />
        </g>
        <g transform="translate(-7 -5) scale(1.0523 0.574)" fill="none" strokeLinecap="round" stroke="#dcdcdc" strokeWidth="3">
          <path d="M440 545Q410 620 420 680 470 760 470 830 500 880 540 930M470 590Q500 650 510 720T560 900M430 620Q420 690 450 740T480 850M448 640Q470 700 485 760T525 880M525 720Q530 800 560 880M460 760Q480 850 520 920" />
          <path d="M845 385L880 440M962 605L1012 740 1030 790M905 870L1035 818M740 940L905 880M625 1110L660 1180M1090 775L1160 745" />
          <path d="M820 710L885 770M835 790L850 830M880 1110L850 1030M760 690L800 720" strokeWidth="2" />
          <path d="M288 760L318 765 348 805 320 815ZM350 835L385 860 370 878Z" fill="#dcdcdc" stroke="none" filter="url(#soft3)" />
        </g>
        <rect width="1636" height="884" filter="url(#grain)" className="mix-blend-multiply" opacity="0.9" />
        <g mask="url(#roughMask)" className="mix-blend-multiply">
          <rect width="1636" height="884" filter="url(#coarse)" opacity="0.55" />
        </g>
        <g transform="translate(483 215) scale(0.33333)" fill="none">
          <path d="M168 400Q200 350 300 345 300 390 430 445L540 600 640 750 790 905 700 930 620 910 500 820 380 730 280 630 200 530Q168 460 168 400Z" fill="#fff" opacity="0.9" filter="url(#soft2)" />
          <path d="M860 200Q980 190 1180 260L1320 325 1420 400 1300 394Q1100 362 960 374 880 330 860 200Z" fill="#fff" opacity="0.75" filter="url(#soft2)" />
          <path d="M240 295Q350 200 560 160 720 138 900 145 1000 155 1100 190" stroke="#c4c4c4" strokeWidth="9" strokeDasharray="5 2 9 3 3 2" />
          <path d="M340 310Q400 225 600 188 760 158 900 170" stroke="#bdbdbd" strokeWidth="11" strokeDasharray="7 3 3 2 10 2" />
          <path d="M230 320L320 275M210 350L310 310M200 370L300 340M350 330L440 290M350 350L430 320" stroke="#e2e2e2" strokeWidth="3" />
          <path d="M560 160Q720 138 900 145 1000 155 1080 180" stroke="#a6a6a6" strokeWidth="4" />
          <path d="M820 160Q980 160 1150 205 1300 258 1390 335L1440 392 1380 352Q1280 280 1130 228 1000 182 820 174Z" fill="#a8a8a8" filter="url(#soft3)" />
          <path d="M1150 215Q1300 262 1390 345L1425 385" stroke="#d0d0d0" strokeWidth="5" />
          <path d="M430 235Q300 290 298 370 340 410 430 440M345 385Q330 360 350 330" stroke="#e0e0e0" strokeWidth="6" />
        </g>
        <g transform="translate(-7 -5) scale(1.0523 0.574)">
          <path d={lights} fill="#fff" opacity="0.85" />
          <path d={clumps} fill="#8f8f8f" opacity="0.75" />
          <g fill="#fff" filter="url(#soft3)">
            <path d="M963 648L984 640 1018 720 1003 727Z" />
            <path d="M1082 742L1197 703 1204 722 1090 766Z" />
            <path d="M978 785L1036 800 1058 806 1086 884 1074 893 1040 815Z" />
            <path d="M934 438L976 426 982 436 942 448Z" />
          </g>
          <path d="M962 648L967 650 1005 727 1001 725ZM1080 742L1088 766 1091 768 1084 742ZM1089 764L1197 723 1200 726 1091 768ZM1034 808L1076 895 1073 893ZM936 447L980 437 978 440 940 449Z" fill="#8f8f8f" />
        </g>
        <g transform="translate(483 215) scale(0.33333)">
          <path d="M1300 105L1350 95 1470 240 1565 375 1520 382 1400 235Z" fill="#fff" filter="url(#soft3)" />
          <path d="M1296 112L1304 114 1380 205 1480 325 1520 384 1512 380 1460 310 1360 190Z" fill="#777" />
          <path d="M300 893L350 895 540 1190 545 1215 495 1235 400 1060Z" fill="#fcfcfc" filter="url(#soft3)" />
          <path d="M286 898L300 900 345 965 410 1080 455 1175 492 1245 478 1238 425 1165 380 1060 330 965Z" fill="#666" />
          <path d="M615 1008L650 1052 720 1055 920 995 1200 930 1390 872 1370 862 900 965 660 1022Z" fill="#c6c6c6" filter="url(#soft3)" />
          <path d="M618 1012L640 1040 665 1052 650 1052 630 1035Z" fill="#7b7b7b" />
          <path d="M605 1000L690 970 900 925 1160 868 1390 832 1415 858 1180 905 900 962 750 1005 655 1028Z" fill="#fff" filter="url(#soft3)" />
          <path d="M720 1000l20-28M780 990l20-30M850 975l18-30M930 955l15-28M1010 940l15-25M1090 920l15-22M1180 900l14-18" stroke="#e6e6e6" strokeWidth="4" />
        </g>
      </g>
    </g>
  );
}

function AxisText({ x, y, t }: { x: number; y: number; t: string }) {
  return (
    <text x={x} y={y} fontSize="19" fill="#5c5c60" fontFamily="Open Sans, sans-serif">{t}</text>
  );
}

function ViewTag({ name, w, active }: { name: string; w: number; active?: boolean }) {
  return (
    <div className={`absolute left-0 top-0 flex h-[27px] items-center rounded-br-[4px] pl-[10px] text-[17px] font-bold leading-none ${active ? "bg-[#8ba5c3] text-black" : "bg-[#c7ccd5] text-[#48484a]"}`}>
      <Fit w={w}>{name}</Fit>
      <span className={`ml-[8px] h-[24px] w-px ${active ? "bg-black" : "bg-[#48484a]"}`} />
      <svg className="-mt-[3px] ml-[2px] mr-[3px]" width="11" height="6" viewBox="0 0 11 6">
        <path d="M0 0h11L5.500 6Z" fill={active ? "#000" : "#48484a"} />
      </svg>
    </div>
  );
}

function PerspectiveView() {
  return (
    <div className="relative h-[886px] overflow-hidden border border-[#b9c3da] bg-[#9ca3ab]">
      <svg width="1636" height="884" viewBox="0 0 1636 884" className="block" fill="none">
        <path d={gridPath(false)} stroke="#8f969d" strokeWidth="1" />
        <path d={gridPath(true)} stroke="#81848c" strokeWidth="1.200" />
        <path d={`M${project(0, 0)}L${project(0, 1)}`} stroke="#3f9440" strokeWidth="2" />
        <path d={`M${project(0, 0)}L${project(1, 0)}`} stroke="#963d3d" strokeWidth="2" />
        <Terrain />
        <path d="M54 792V830L21 815M54 830L82 813" stroke="#5c5c60" strokeWidth="1.200" />
        <AxisText x={59} y={792} t="z" />
        <AxisText x={24} y={813} t="y" />
        <AxisText x={87} y={814} t="x" />
      </svg>
      <ViewTag name="Perspective" w={98} active />
    </div>
  );
}

function RightView() {
  const minorV: number[] = [];
  const majorV: number[] = [];
  for (let i = -6; i <= 86; i++) (i % 10 === 0 ? majorV : minorV).push(Math.round(114 + i * 17.615));
  const minorH: number[] = [];
  const majorH: number[] = [];
  for (let i = -36; i <= 13; i++) (i % 10 === 0 ? majorH : minorH).push(Math.round(645 + i * 17.615));
  const rnd = seeded(5);
  let up = "M870 348";
  let down = "M870 347";
  let upDark = "";
  for (let x = 872; x < 1454; x += 2) {
    const k = x > 1400 ? 34 : x > 1080 ? 24 : 3;
    const top = x < 1000 ? 345 : 334 + (x - 1000) * 0.012 - Math.pow(rnd(), 2.2) * k;
    up += `L${x} ${top.toFixed(1)}`;
    if (x > 1080 && rnd() > 0.6) upDark += `M${x} ${(top + 2 + rnd() * 6).toFixed(0)}v${(3 + rnd() * 6).toFixed(0)}`;
    down += `L${x} ${(349 + (x > 935 ? Math.pow(rnd(), 6) * (x < 1120 ? 34 : 24) + rnd() * 3 : rnd() * 3)).toFixed(1)}`;
  }
  let flecks = "";
  for (let i = 0; i < 330; i++) {
    const x = 120 + rnd() * 740;
    flecks += `M${x.toFixed(0)} ${(336 + rnd() * 8).toFixed(0)}v${(3 + rnd() * 7).toFixed(0)}`;
  }
  let streaks = "";
  for (let i = 0; i < 420; i++) {
    const t = rnd();
    const x = 560 + t * 590;
    const top = 300 - t * 75;
    streaks += `M${x.toFixed(0)} ${(top + rnd() * (335 - top)).toFixed(0)}l${(4 + rnd() * 6).toFixed(0)} ${(t > 0.6 ? 9 : 3).toFixed(0)}`;
  }
  return (
    <div className="relative h-[878px] overflow-hidden border border-[#b9c3da] bg-[#9ca3ab]">
      <svg width="1636" height="876" viewBox="0 0 1636 876" className="block">
        <g fill="#9198a0" shapeRendering="crispEdges">
          {minorV.map((x) => <rect key={x} x={x} y="0" width="1" height="876" />)}
          {minorH.map((y) => <rect key={y} x="0" y={y} width="1636" height="1" />)}
        </g>
        <g fill="#81858e" shapeRendering="crispEdges">
          {majorV.map((x) => <rect key={x} x={x} y="0" width="1" height="876" />)}
          {majorH.map((y) => <rect key={y} x="0" y={y} width="1636" height="1" />)}
        </g>
        <rect x="113" y="0" width="2" height="646" fill="#479648" />
        <rect x="114" y="645" width="1522" height="2" fill="#9b4141" />
        <g transform="translate(-7 325) scale(1.0523 0.38265)">
          <defs>
            <clipPath id="hillClip">
              <path d="M505 334L530 310 560 292 650 268 730 249 820 235 900 219 960 212 1045 207 1062 225 1105 270 1130 273 1160 295 1190 330 980 348 620 345Z" />
            </clipPath>
          </defs>
          <g clipPath="url(#hillClip)">
            <rect x="500" y="200" width="700" height="150" fill="#a8a8a8" />
            <path d="M600 345L680 310 740 292 870 252 1010 230 1048 250 1100 275 1020 295 960 325 920 348Z" fill="#cbcbcb" />
            <path d="M900 348L1010 300 1110 270 1130 273 1190 330Z" fill="#a2a2a2" />
            <path d={streaks} stroke="#999" strokeWidth="1.200" opacity="0.7" />
            <path d={streaks} stroke="#dedede" strokeWidth="1.500" transform="translate(6 7)" opacity="0.7" />
            <path d="M630 325L740 290 870 251 1010 229" fill="none" stroke="#8d8d8d" strokeWidth="1.500" />
          </g>
          <path d={up + "V350H870Z"} fill="#d2d2d0" />
          <path d={upDark} stroke="#6f6f6f" strokeWidth="1.200" />
          <path d={down + "V345H870Z"} fill="#8e8e8c" />
          <path d="M870 346L940 345 980 331 1040 333 1110 339 1454 344V350L1200 346 1050 349 870 350Z" fill="#505050" />
          <path d="M115 345L180 340 250 335 440 328 520 331 600 334 715 342 735 364 750 366 762 340 870 348 868 364 850 367 600 370 500 372 360 370 330 364 315 354 235 353 215 362 200 368 115 371Z" fill="#464646" />
          <path d={flecks} stroke="#777" strokeWidth="1" />
          <path d="M708 340L765 338 750 366H737Z" fill="#b0b0b0" />
        </g>
        <path d="M54.500 777V822.500H99" fill="none" stroke="#5c5c60" strokeWidth="1.200" />
        <AxisText x={58} y={779} t="z" />
        <AxisText x={103} y={820} t="y" />
      </svg>
      <ViewTag name="Right" w={46} />
    </div>
  );
}

const GearIcon = ({ className = "", fill = "#b9b9b9" }: { className?: string; fill?: string }) => (
  <svg width="22" height="22" viewBox="0 0 22 22" className={className}>
    <circle cx="11" cy="11" r="8" fill={fill} stroke="#9b9b9b" />
    <circle cx="11" cy="11" r="9" fill="none" stroke="#9b9b9b" strokeWidth="2.600" strokeDasharray="3.600 3.470" />
    <circle cx="11" cy="11" r="2.800" fill="#efeff2" stroke="#9b9b9b" strokeWidth="1.500" />
  </svg>
);

const SIDE_TABS: { t: string; w: number; icon: ReactNode }[] = [
  {
    t: "Pr", w: 17,
    icon: (
      <g fill="none" strokeWidth="5">
        <circle cx="11" cy="11" r="10.500" fill="#000" stroke="none" />
        {["#ff2a2a", "#ff9a00", "#f7f000", "#30e020", "#00d8c8", "#1f7dff", "#5a20ff", "#f020d0"].map((c, i) => (
          <path key={c} d="M11 3.500A7.500 7.500 0 0 1 16.500 5.900" stroke={c} transform={`rotate(${i * 45} 11 11)`} />
        ))}
        <circle cx="11" cy="11" r="5" fill="#f4f4f4" stroke="none" />
      </g>
    ),
  },
  {
    t: "La", w: 18,
    icon: (
      <g stroke="#1a1a1a" strokeWidth="1" strokeLinejoin="round">
        <path d="M1 10L11 19 22 14V16L11 23 1 14Z" fill="#2747a0" />
        <path d="M0 6L11 15 22 10V14L11 20 0 11Z" fill="#f5f5f5" />
        <path d="M0 1L11 10V15L1 7Z" fill="#ff7a4c" />
        <path d="M11 10L22 6V10L11 15Z" fill="#d0200c" />
        <path d="M0 1L22 6 11 10Z" fill="#ff9a70" />
      </g>
    ),
  },
  {
    t: "Re", w: 19,
    icon: (
      <g>
        <circle cx="9.500" cy="13" r="9.500" fill="url(#ball)" />
        <path d="M10 6l6-5 6 1v5l-8 1Z" fill="#d9d9d9" stroke="#222" strokeWidth="1.200" />
      </g>
    ),
  },
  {
    t: "M", w: 15,
    icon: (
      <g stroke="#333" strokeWidth="1.200">
        <path d="M11 6l4-5q4 0 4 5l-4 6Z" fill="#bdbdbd" />
        <path d="M8 10l3-4 4 6-3 4Z" fill="#e9591c" />
        <path d="M8 10l4 6-6 5Q0 22 1 16Z" fill="#e6e6e6" />
      </g>
    ),
  },
  {
    t: "Li", w: 12,
    icon: (
      <g stroke="#4a3a00" strokeWidth="1.200">
        <path d="M1 18V5h7l2 3h10v10Z" fill="#f0bf35" />
        <path d="M1 19L6 10h16l-4 9Z" fill="#ffe07a" />
      </g>
    ),
  },
  {
    t: "Th", w: 19,
    icon: (
      <g fill="none" stroke="#e52a20" strokeWidth="2.800">
        <path d="M0 4.500h12M4 4.500Q0 17 10 16.500M13 17.500V11q0-3 4-3" />
        <circle cx="19.500" cy="10" r="2.800" stroke="#c8c8c8" strokeWidth="2" />
      </g>
    ),
  },
  {
    t: "He", w: 22,
    icon: (
      <g>
        <rect x="0.500" y="0.500" width="21" height="21" fill="#e9eefb" stroke="#222c55" />
        <rect x="1" y="1" width="20" height="4" fill="#33508f" />
        <circle cx="11" cy="13.500" r="7.500" fill="#3a62d8" />
        <text x="11" y="18.500" textAnchor="middle" fontSize="14" fontWeight="700" fill="#fff" fontFamily="Liberation Serif, serif">?</text>
      </g>
    ),
  },
];

const SIDE_TOOLS: ReactNode[] = [
  <path d="M3 1h10l5 5v15H3Z" fill="#f2f2f4" stroke="#222" strokeWidth="1.600" />,
  <g fill="#bdbdbd" stroke="#9a9a9a"><path d="M1 0h8l3 3v12H1Z" /><path d="M8 6h8l4 4v11H8Z" /></g>,
  <path d="M1 1l20 20M21 1L1 21" stroke="#b2b2b2" strokeWidth="3.500" />,
  <path d="M11 5l10 11H1Z" fill="#bcbcbc" stroke="#999" strokeWidth="1.500" />,
  <path d="M11 17L1 5h20Z" fill="#bcbcbc" stroke="#999" strokeWidth="1.500" />,
  <path d="M17 1v20L5 11Z" fill="#a8a8a8" stroke="#999" />,
  <g><path d="M1 1h19l-6 9v11H8V10Z" fill="#5b8de8" stroke="#15295c" strokeWidth="1.400" /><path d="M23 17v6h-6Z" /></g>,
  <g><path d="M3 1h9l5 5v15H3Z" fill="#c2c2c2" stroke="#9a9a9a" strokeWidth="1.500" /><path d="M23 17v6h-6Z" fill="#888" /></g>,
  <g><path d="M2 20L13 7" stroke="#15306e" strokeWidth="5" strokeLinecap="round" /><path d="M6 3q6-5 11 0l5 6-3 3-5-4-3 1-2-5Z" fill="#5c5c5c" stroke="#222" /><path d="M23 17v6h-6Z" /></g>,
  <g><circle cx="11" cy="11" r="10.500" fill="#3156cf" /><text x="11" y="17.500" textAnchor="middle" fontSize="19" fontWeight="700" fill="#fff" fontFamily="Liberation Serif, serif">?</text></g>,
];

function LayersPanel() {
  return (
    <div className="mt-[4px] flex h-[1795px] w-[443px] shrink-0 flex-col border-b border-[#bcc6dc] text-[17.5px] leading-none text-[#111]">
      <div className="h-[3px] shrink-0 border-y border-[#c3cbe0]" />
      <div className="flex h-[34px] shrink-0 items-end border-b border-[#bcc6dc]">
        {SIDE_TABS.map((s, i) => (
          <div key={s.t} className="relative flex h-[32px] w-[59px] shrink-0 items-center pl-[5px] pt-[3px]">
            <svg className="absolute -bottom-px left-0 overflow-visible" width="70" height="33" viewBox="0 0 70 33">
              <path d={i === 1 || i === 6 ? "M0 33V7L5 1H42L74 32V33Z" : "M0 33V7L5 1H42L59 17V33Z"} fill={i === 1 ? "#f4f5f9" : "#d6d6d6"} stroke="#bcc6dc" strokeWidth="1.200" />
              {i === 1 && <path d="M1 33H73" stroke="#f4f5f9" strokeWidth="2" />}
            </svg>
            <svg width="22" height="23" viewBox="0 0 22 23" className="relative shrink-0 overflow-visible">{s.icon}</svg>
            <span className="relative ml-[5px] pt-[2px]"><Fit w={s.w}>{s.t}</Fit></span>
          </div>
        ))}
        <GearIcon className="relative mb-[3px] ml-[6px] shrink-0" />
      </div>
      <div className="flex h-[39px] shrink-0 items-center gap-[13px] border-b border-l border-[#bcc6dc] bg-[#f7f8fb] pl-[6px] pt-[1px]">
        {SIDE_TOOLS.map((s, i) => (
          <svg key={i} width="22" height="22" viewBox="0 0 22 22" className="shrink-0 overflow-visible">{s}</svg>
        ))}
      </div>
      <div className="flex min-h-0 flex-1 flex-col border-l border-[#bcc6dc] bg-[#f5f6f9] pr-[4px]">
        <div className="flex h-[31px] shrink-0 items-center bg-white pt-1">
          <span className="w-[182px] pl-[6px]"><Fit w={47}>Name</Fit></span>
          {[0, 1, 2, 3].map((i) => <span key={i} className="-mt-1 h-[31px] w-[25px] border-l border-[#dcdfe6]" />)}
          <span className="-mt-1 flex h-[31px] w-[80px] items-center border-l border-[#dcdfe6] pl-[6px] pt-1"><Fit w={64}>Material</Fit></span>
          <span className="-mt-1 flex h-[31px] items-center border-l border-[#dcdfe6] pl-[6px] pt-1"><Fit w={67}>Linetype</Fit></span>
        </div>
        <div className="flex h-[29px] shrink-0 items-center border-b border-dotted border-[#dcdcdc] bg-white pt-[2px] font-bold text-black">
          <span className="w-[184px] pl-[9px] pt-[3px]"><Fit w={64}>Default</Fit></span>
          <svg width="20" height="14" viewBox="0 0 20 14" fill="none" stroke="#111" strokeWidth="2"><path d="M1 7l5 5.500L19 1" /></svg>
          <span className="ml-[56px] h-[18px] w-[18px] bg-black" />
          <span className="ml-[7px] h-[22px] w-[22px] rounded-full border border-[#eeeeee] bg-[#f9f9f9]" />
          <span className="ml-[60px] pt-[3px]"><Fit w={61}>Conti...</Fit></span>
        </div>
        <div className="flex-1 bg-white" />
        <div className="flex h-[25px] shrink-0 items-center bg-[#f0f0f0] pb-px">
          <svg width="25" height="12" viewBox="0 0 25 12" fill="none" stroke="#555" strokeWidth="2.600"><path d="M15 1L9.500 6l5.500 5" /></svg>
          <span className="h-full w-[310px] bg-[#cdcdcd]" />
          <svg className="ml-auto" width="25" height="12" viewBox="0 0 25 12" fill="none" stroke="#555" strokeWidth="2.600"><path d="M8 1l5.500 5L8 11" /></svg>
        </div>
      </div>
    </div>
  );
}

function Rhino() {
  return (
    <div className={`flex min-w-0 flex-1 flex-col bg-[#eaebef] ${UI}`}>
      <div className="flex h-[61px] shrink-0 justify-end bg-white pr-[26px] pt-[8px]">
        <svg width="156" height="16" viewBox="0 0 156 16" fill="none" stroke="#000" strokeWidth="1.200">
          <path d="M0 7.500h15M69.500 3.500h12v12h-12ZM72.500 3.500v-3h12v12h-3M140.500 0.500l15 15M155.500 0.500l-15 15" />
        </svg>
      </div>
      <div className="mt-[5px] flex h-[48px] shrink-0 justify-end bg-white">
        <div className="flex w-[24px] flex-col items-center justify-between bg-[#f0f0f0] py-[9px]">
          <svg width="10" height="7" viewBox="0 0 10 7" fill="none" stroke="#555" strokeWidth="2.200"><path d="M0.500 6L5 1.500 9.500 6" /></svg>
          <svg width="10" height="7" viewBox="0 0 10 7" fill="none" stroke="#555" strokeWidth="2.200"><path d="M0.500 1L5 5.500 9.500 1" /></svg>
        </div>
      </div>
      <div className="flex h-[29px] shrink-0 justify-end border-t border-[#bcc6dc] bg-white">
        <div className="flex w-[23px] flex-col pt-px">
          <span className="flex h-[13px] items-center justify-center border border-[#a8a8a8] bg-[#f0f0f0]"><svg width="9" height="5" viewBox="0 0 9 5"><path d="M0 5h9L4.500 0Z" /></svg></span>
          <span className="flex h-[13px] items-center justify-center border border-[#a8a8a8] bg-[#f0f0f0]"><svg width="9" height="5" viewBox="0 0 9 5"><path d="M0 0h9L4.500 5Z" /></svg></span>
        </div>
      </div>
      <div className="mt-[3px] h-[5px] shrink-0 border-t border-[#ccd3e4]" />
      <div className="relative flex h-[30px] shrink-0 items-center border-b border-[#bcc6dc] pt-[3px] text-[17.5px] leading-none text-[#111]">
        <svg className="absolute left-0 top-0" width="190" height="30" viewBox="0 0 190 30">
          <path d="M0 0.500H38Q44 0.500 44 6V12L27 29.500H0Z" fill="#d6d6d6" stroke="#bcc6dc" />
          <path d="M27 29.500L51 0.500H178Q184 0.500 184 6V30H27Z" fill="#eaebef" />
          <path d="M27 29.500L51 0.500H178Q184 0.500 184 6V30" fill="none" stroke="#bcc6dc" />
        </svg>
        <span className="relative ml-[3px]"><Fit w={21}>V6</Fit></span>
        <span className="relative ml-[37px]"><Fit w={104}>Thea Toolbar</Fit></span>
        <GearIcon className="absolute right-0 top-[2px]" fill="#dcdcdc" />
      </div>
      <div className="mt-[53px] flex shrink-0 gap-[9px] pl-[4px]">
        <div className="flex w-[1638px] shrink-0 flex-col gap-[4px]">
          <PerspectiveView />
          <RightView />
        </div>
        <LayersPanel />
      </div>
      <div className="mt-[41px] flex flex-1 justify-end border-t border-[#bcc6dc] pr-[5px]">
        <span className="w-px bg-[#bcc6dc]" />
      </div>
    </div>
  );
}

export default function App() {
  return (
    <div className="relative flex h-[2099px] w-[3836px] overflow-hidden bg-[#eaebef]">
      <Defs />
      <Grasshopper />
      <Rhino />
    </div>
  );
}
